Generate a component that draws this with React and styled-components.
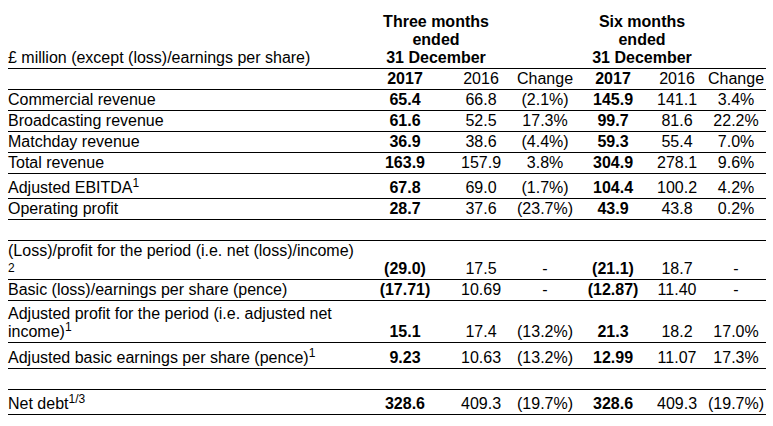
import React from 'react';
import styled, { createGlobalStyle } from 'styled-components';

const GlobalStyle = createGlobalStyle`
  html, body {
    margin: 0;
    padding: 0;
    background: #ffffff;
  }
  body {
    font-family: 'Liberation Sans', Arial, Helvetica, sans-serif;
    color: #000000;
  }
`;

const Page = styled.div`
  padding: 8px 7px 0 8px;
`;

const Table = styled.table`
  width: 758px;
  table-layout: fixed;
  border-collapse: separate;
  border-spacing: 0;
  font-size: 16px;
  line-height: 18px;
`;

// Header cells sitting over the column groups
const HeadCell = styled.th`
  height: 59px;
  padding: 0 0 1px;
  vertical-align: bottom;
  text-align: ${p => (p.$left ? 'left' : 'center')};
  font-weight: ${p => (p.$bold ? 700 : 400)};
  white-space: nowrap;
  border-bottom: 1px solid #000;
`;

// Ordinary body cell
const Cell = styled.td`
  padding: ${p => p.$top ?? 1}px 0 1px;
  vertical-align: bottom;
  text-align: ${p => (p.$left ? 'left' : 'center')};
  font-weight: ${p => (p.$bold ? 700 : 400)};
  white-space: nowrap;
  border-bottom: 1px solid #000;
`;

const Sup = styled.sup`
  font-size: 12px;
  line-height: 0;
  vertical-align: ${p => p.$raise ?? 6}px;
`;

// Data rows: label, three-month trio, six-month trio
const rows = [
  { label: 'Commercial revenue', v: ['65.4', '66.8', '(2.1%)', '145.9', '141.1', '3.4%'] },
  { label: 'Broadcasting revenue', v: ['61.6', '52.5', '17.3%', '99.7', '81.6', '22.2%'] },
  { label: 'Matchday revenue', v: ['36.9', '38.6', '(4.4%)', '59.3', '55.4', '7.0%'] },
  { label: 'Total revenue', v: ['163.9', '157.9', '3.8%', '304.9', '278.1', '9.6%'] },
  { label: 'Adjusted EBITDA', sup: '1', top: 5, v: ['67.8', '69.0', '(1.7%)', '104.4', '100.2', '4.2%'] },
  { label: 'Operating profit', v: ['28.7', '37.6', '(23.7%)', '43.9', '43.8', '0.2%'] },
  { empty: true },
  {
    label: '(Loss)/profit for the period (i.e. net (loss)/income)',
    wrapSup: '2',
    v: ['(29.0)', '17.5', '-', '(21.1)', '18.7', '-'],
  },
  { label: 'Basic (loss)/earnings per share (pence)', v: ['(17.71)', '10.69', '-', '(12.87)', '11.40', '-'] },
  {
    label: 'Adjusted profit for the period (i.e. adjusted net',
    line2: 'income)',
    sup: '1',
    top: 4,
    v: ['15.1', '17.4', '(13.2%)', '21.3', '18.2', '17.0%'],
  },
  { label: 'Adjusted basic earnings per share (pence)', sup: '1', top: 6, v: ['9.23', '10.63', '(13.2%)', '12.99', '11.07', '17.3%'] },
  { empty: true },
  { label: 'Net debt', sup: '1/3', top: 5, v: ['328.6', '409.3', '(19.7%)', '328.6', '409.3', '(19.7%)'] },
];

const widths = [352, 90, 62, 66, 70, 58, 60];

const Label = ({ row }) => {
  if (row.wrapSup) {
    return (
      <>
        {row.label}
        <br />
        <Sup $raise={2}>{row.wrapSup}</Sup>
      </>
    );
  }
  if (row.line2) {
    return (
      <>
        {row.label}
        <br />
        {row.line2}
        <Sup>{row.sup}</Sup>
      </>
    );
  }
  return (
    <>
      {row.label}
      {row.sup && <Sup>{row.sup}</Sup>}
    </>
  );
};

const App = () => {
  return (
    <Page>
      <GlobalStyle />
      <Table>
        <colgroup>
          {widths.map((w, i) => (
            <col key={i} style={{ width: w }} />
          ))}
        </colgroup>
        <thead>
          <tr>
            <HeadCell $left>£ million (except (loss)/earnings per share)</HeadCell>
            <HeadCell colSpan={2} $bold>
              Three months
              <br />
              ended
              <br />
              31 December
            </HeadCell>
            <HeadCell />
            <HeadCell colSpan={2} $bold>
              Six months
              <br />
              ended
              <br />
              31 December
            </HeadCell>
            <HeadCell />
          </tr>
        </thead>
        <tbody>
          <tr>
            <Cell $left />
            <Cell $bold>2017</Cell>
            <Cell>2016</Cell>
            <Cell>Change</Cell>
            <Cell $bold>2017</Cell>
            <Cell>2016</Cell>
            <Cell>Change</Cell>
          </tr>
          {rows.map((row, i) =>
            row.empty ? (
              <tr key={i}>
                <Cell colSpan={7}>&nbsp;</Cell>
              </tr>
            ) : (
              <tr key={i}>
                <Cell $left $top={row.top}>
                  <Label row={row} />
                </Cell>
                {row.v.map((val, j) => (
                  <Cell key={j} $top={row.top} $bold={j === 0 || j === 3}>
                    {val}
                  </Cell>
                ))}
              </tr>
            )
          )}
        </tbody>
      </Table>
    </Page>
  );
};

export default App;
